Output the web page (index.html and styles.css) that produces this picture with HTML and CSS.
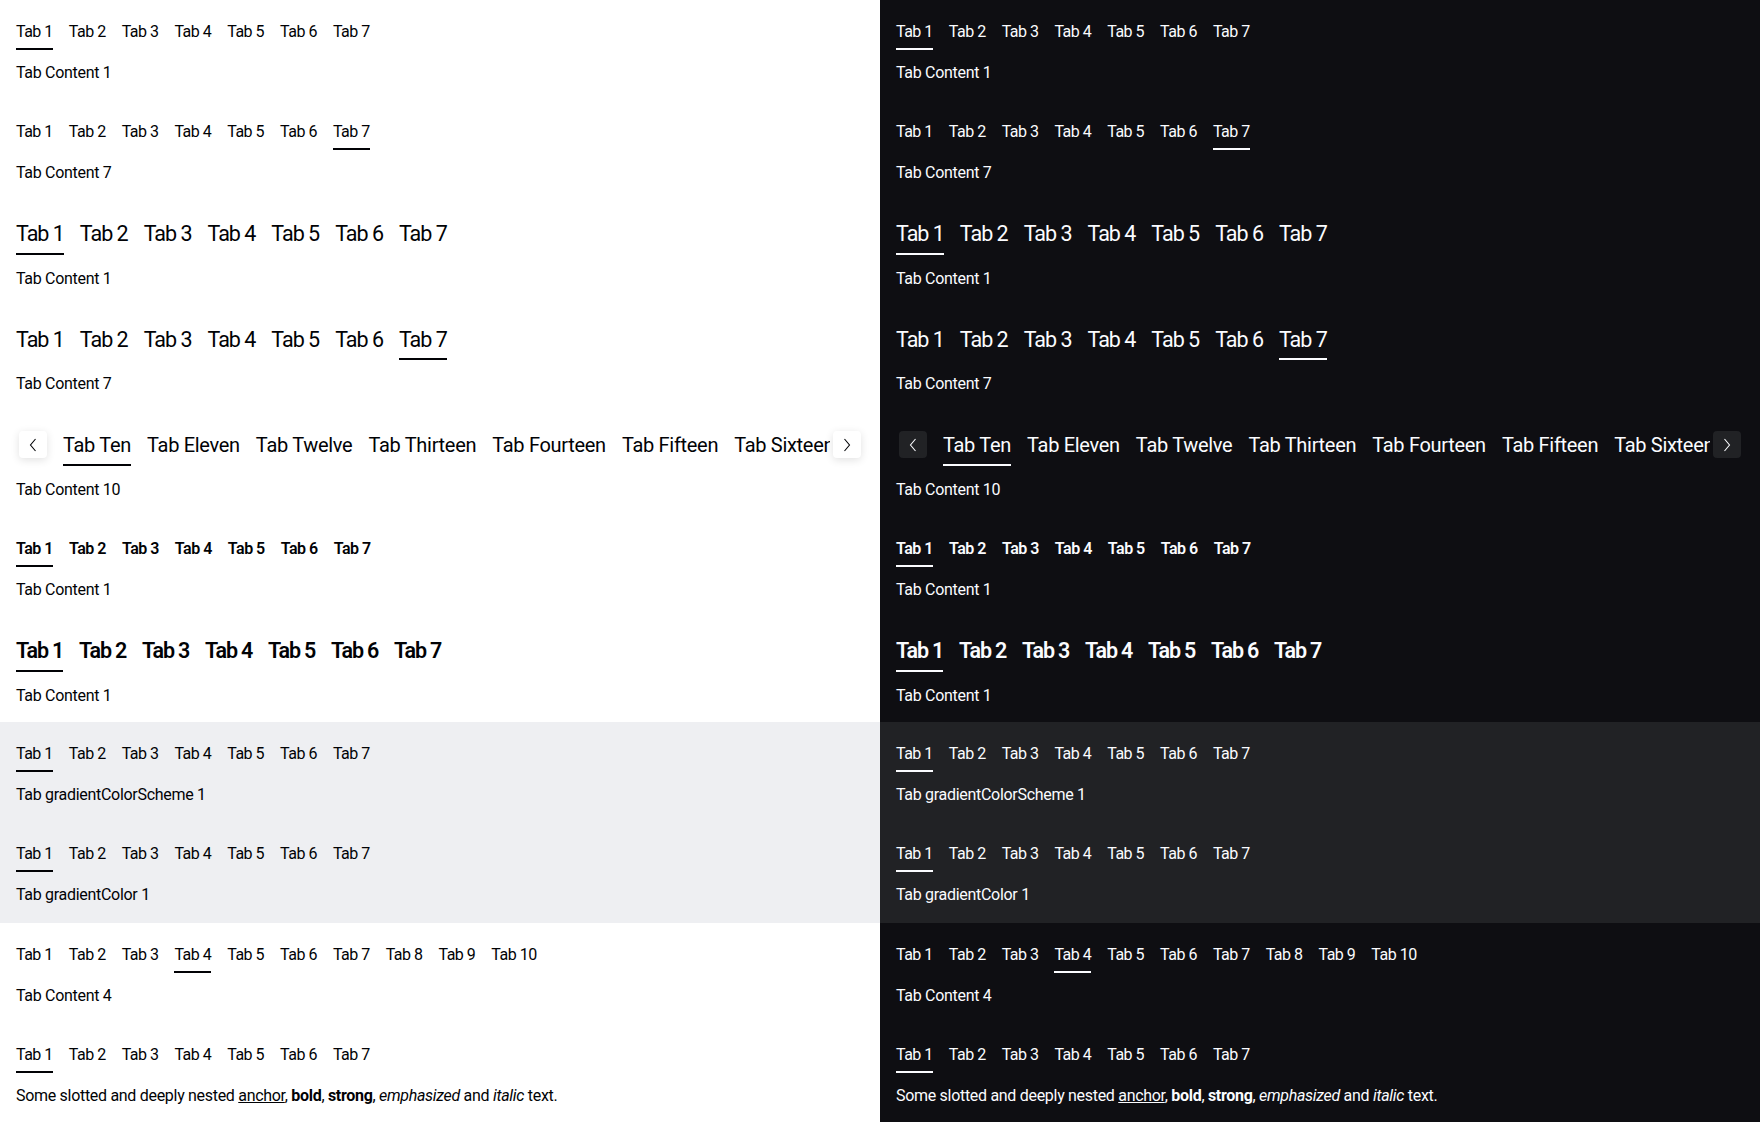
FILE: index.html
```html
<!DOCTYPE html>
<html lang="en">
<head>
<meta charset="utf-8">
<title>Tabs</title>
<link rel="stylesheet" href="styles.css">
</head>
<body>
<div class="page">
  <div class="col light">
    <section class="sec first">
      <div class="tabs small">
        <div class="bar"><button class="tab active">Tab 1</button><button class="tab">Tab 2</button><button class="tab">Tab 3</button><button class="tab">Tab 4</button><button class="tab">Tab 5</button><button class="tab">Tab 6</button><button class="tab">Tab 7</button></div>
        <div class="content">Tab Content 1</div>
      </div>
      <div class="tabs small">
        <div class="bar"><button class="tab">Tab 1</button><button class="tab">Tab 2</button><button class="tab">Tab 3</button><button class="tab">Tab 4</button><button class="tab">Tab 5</button><button class="tab">Tab 6</button><button class="tab active">Tab 7</button></div>
        <div class="content">Tab Content 7</div>
      </div>
      <div class="tabs medium">
        <div class="bar"><button class="tab active">Tab 1</button><button class="tab">Tab 2</button><button class="tab">Tab 3</button><button class="tab">Tab 4</button><button class="tab">Tab 5</button><button class="tab">Tab 6</button><button class="tab">Tab 7</button></div>
        <div class="content">Tab Content 1</div>
      </div>
      <div class="tabs medium">
        <div class="bar"><button class="tab">Tab 1</button><button class="tab">Tab 2</button><button class="tab">Tab 3</button><button class="tab">Tab 4</button><button class="tab">Tab 5</button><button class="tab">Tab 6</button><button class="tab active">Tab 7</button></div>
        <div class="content">Tab Content 7</div>
      </div>
      <div class="tabs medium scroll">
        <div class="scroller">
          <button class="arrow" aria-label="previous"><svg viewBox="0 0 24 24" width="24" height="24"><path d="M14.5 6 L9.5 12 L14.5 18" fill="none" stroke="currentColor" stroke-width="1.1"/></svg></button>
          <div class="viewport">
            <div class="bar"><button class="tab active">Tab Ten</button><button class="tab">Tab Eleven</button><button class="tab">Tab Twelve</button><button class="tab">Tab Thirteen</button><button class="tab">Tab Fourteen</button><button class="tab">Tab Fifteen</button><button class="tab">Tab Sixteen</button><button class="tab">Tab Seventeen</button></div>
          </div>
          <button class="arrow" aria-label="next"><svg viewBox="0 0 24 24" width="24" height="24"><path d="M9.5 6 L14.5 12 L9.5 18" fill="none" stroke="currentColor" stroke-width="1.1"/></svg></button>
        </div>
        <div class="content">Tab Content 10</div>
      </div>
      <div class="tabs small semibold">
        <div class="bar"><button class="tab active">Tab 1</button><button class="tab">Tab 2</button><button class="tab">Tab 3</button><button class="tab">Tab 4</button><button class="tab">Tab 5</button><button class="tab">Tab 6</button><button class="tab">Tab 7</button></div>
        <div class="content">Tab Content 1</div>
      </div>
      <div class="tabs medium semibold">
        <div class="bar"><button class="tab active">Tab 1</button><button class="tab">Tab 2</button><button class="tab">Tab 3</button><button class="tab">Tab 4</button><button class="tab">Tab 5</button><button class="tab">Tab 6</button><button class="tab">Tab 7</button></div>
        <div class="content">Tab Content 1</div>
      </div>
    </section>
    <section class="sec surface">
      <div class="tabs small">
        <div class="bar"><button class="tab active">Tab 1</button><button class="tab">Tab 2</button><button class="tab">Tab 3</button><button class="tab">Tab 4</button><button class="tab">Tab 5</button><button class="tab">Tab 6</button><button class="tab">Tab 7</button></div>
        <div class="content">Tab gradientColorScheme 1</div>
      </div>
      <div class="tabs small">
        <div class="bar"><button class="tab active">Tab 1</button><button class="tab">Tab 2</button><button class="tab">Tab 3</button><button class="tab">Tab 4</button><button class="tab">Tab 5</button><button class="tab">Tab 6</button><button class="tab">Tab 7</button></div>
        <div class="content">Tab gradientColor 1</div>
      </div>
    </section>
    <section class="sec">
      <div class="tabs small">
        <div class="bar"><button class="tab">Tab 1</button><button class="tab">Tab 2</button><button class="tab">Tab 3</button><button class="tab active">Tab 4</button><button class="tab">Tab 5</button><button class="tab">Tab 6</button><button class="tab">Tab 7</button><button class="tab">Tab 8</button><button class="tab">Tab 9</button><button class="tab">Tab 10</button></div>
        <div class="content">Tab Content 4</div>
      </div>
      <div class="tabs small">
        <div class="bar"><button class="tab active">Tab 1</button><button class="tab">Tab 2</button><button class="tab">Tab 3</button><button class="tab">Tab 4</button><button class="tab">Tab 5</button><button class="tab">Tab 6</button><button class="tab">Tab 7</button></div>
        <div class="content">Some slotted and deeply nested <a href="#">anchor</a>, <b>bold</b>, <strong>strong</strong>, <em>emphasized</em> and <i>italic</i> text.</div>
      </div>
    </section>
  </div>

  <div class="col dark">
    <section class="sec first">
      <div class="tabs small">
        <div class="bar"><button class="tab active">Tab 1</button><button class="tab">Tab 2</button><button class="tab">Tab 3</button><button class="tab">Tab 4</button><button class="tab">Tab 5</button><button class="tab">Tab 6</button><button class="tab">Tab 7</button></div>
        <div class="content">Tab Content 1</div>
      </div>
      <div class="tabs small">
        <div class="bar"><button class="tab">Tab 1</button><button class="tab">Tab 2</button><button class="tab">Tab 3</button><button class="tab">Tab 4</button><button class="tab">Tab 5</button><button class="tab">Tab 6</button><button class="tab active">Tab 7</button></div>
        <div class="content">Tab Content 7</div>
      </div>
      <div class="tabs medium">
        <div class="bar"><button class="tab active">Tab 1</button><button class="tab">Tab 2</button><button class="tab">Tab 3</button><button class="tab">Tab 4</button><button class="tab">Tab 5</button><button class="tab">Tab 6</button><button class="tab">Tab 7</button></div>
        <div class="content">Tab Content 1</div>
      </div>
      <div class="tabs medium">
        <div class="bar"><button class="tab">Tab 1</button><button class="tab">Tab 2</button><button class="tab">Tab 3</button><button class="tab">Tab 4</button><button class="tab">Tab 5</button><button class="tab">Tab 6</button><button class="tab active">Tab 7</button></div>
        <div class="content">Tab Content 7</div>
      </div>
      <div class="tabs medium scroll">
        <div class="scroller">
          <button class="arrow" aria-label="previous"><svg viewBox="0 0 24 24" width="24" height="24"><path d="M14.5 6 L9.5 12 L14.5 18" fill="none" stroke="currentColor" stroke-width="1.1"/></svg></button>
          <div class="viewport">
            <div class="bar"><button class="tab active">Tab Ten</button><button class="tab">Tab Eleven</button><button class="tab">Tab Twelve</button><button class="tab">Tab Thirteen</button><button class="tab">Tab Fourteen</button><button class="tab">Tab Fifteen</button><button class="tab">Tab Sixteen</button><button class="tab">Tab Seventeen</button></div>
          </div>
          <button class="arrow" aria-label="next"><svg viewBox="0 0 24 24" width="24" height="24"><path d="M9.5 6 L14.5 12 L9.5 18" fill="none" stroke="currentColor" stroke-width="1.1"/></svg></button>
        </div>
        <div class="content">Tab Content 10</div>
      </div>
      <div class="tabs small semibold">
        <div class="bar"><button class="tab active">Tab 1</button><button class="tab">Tab 2</button><button class="tab">Tab 3</button><button class="tab">Tab 4</button><button class="tab">Tab 5</button><button class="tab">Tab 6</button><button class="tab">Tab 7</button></div>
        <div class="content">Tab Content 1</div>
      </div>
      <div class="tabs medium semibold">
        <div class="bar"><button class="tab active">Tab 1</button><button class="tab">Tab 2</button><button class="tab">Tab 3</button><button class="tab">Tab 4</button><button class="tab">Tab 5</button><button class="tab">Tab 6</button><button class="tab">Tab 7</button></div>
        <div class="content">Tab Content 1</div>
      </div>
    </section>
    <section class="sec surface">
      <div class="tabs small">
        <div class="bar"><button class="tab active">Tab 1</button><button class="tab">Tab 2</button><button class="tab">Tab 3</button><button class="tab">Tab 4</button><button class="tab">Tab 5</button><button class="tab">Tab 6</button><button class="tab">Tab 7</button></div>
        <div class="content">Tab gradientColorScheme 1</div>
      </div>
      <div class="tabs small">
        <div class="bar"><button class="tab active">Tab 1</button><button class="tab">Tab 2</button><button class="tab">Tab 3</button><button class="tab">Tab 4</button><button class="tab">Tab 5</button><button class="tab">Tab 6</button><button class="tab">Tab 7</button></div>
        <div class="content">Tab gradientColor 1</div>
      </div>
    </section>
    <section class="sec">
      <div class="tabs small">
        <div class="bar"><button class="tab">Tab 1</button><button class="tab">Tab 2</button><button class="tab">Tab 3</button><button class="tab active">Tab 4</button><button class="tab">Tab 5</button><button class="tab">Tab 6</button><button class="tab">Tab 7</button><button class="tab">Tab 8</button><button class="tab">Tab 9</button><button class="tab">Tab 10</button></div>
        <div class="content">Tab Content 4</div>
      </div>
      <div class="tabs small">
        <div class="bar"><button class="tab active">Tab 1</button><button class="tab">Tab 2</button><button class="tab">Tab 3</button><button class="tab">Tab 4</button><button class="tab">Tab 5</button><button class="tab">Tab 6</button><button class="tab">Tab 7</button></div>
        <div class="content">Some slotted and deeply nested <a href="#">anchor</a>, <b>bold</b>, <strong>strong</strong>, <em>emphasized</em> and <i>italic</i> text.</div>
      </div>
    </section>
  </div>
</div>
</body>
</html>
```

FILE: styles.css
```css
* { box-sizing: border-box; }

html, body {
  margin: 0;
  padding: 0;
}

body {
  font-family: Roboto, "Liberation Sans", Arial, sans-serif;
  font-size: 16px;
  line-height: 24px;
  letter-spacing: -0.3px;
}

.page {
  display: grid;
  grid-template-columns: 880px 880px;
  width: 1760px;
  min-height: 1122px;
}

.col {
  display: flex;
  flex-direction: column;
}

.col.light {
  background: #ffffff;
  color: #010205;
}

.col.dark {
  background: #0e0e12;
  color: #fbfcff;
}

.sec {
  display: flex;
  flex-direction: column;
  gap: 31px;
  padding: 16px;
}

.sec.first {
  padding-bottom: 14px;
}

.light .surface { background: #eeeff2; }
.dark .surface { background: #212225; }

.tabs {
  display: flex;
  flex-direction: column;
  align-items: flex-start;
}

.bar {
  display: flex;
  gap: 16px;
  white-space: nowrap;
}

.tab {
  font: inherit;
  letter-spacing: -0.5px;
  color: inherit;
  background: none;
  border: 0;
  border-bottom: 2px solid transparent;
  margin: 0;
  padding: 4px 0;
  cursor: pointer;
  line-height: 24px;
}

.tab.active {
  border-bottom-color: currentColor;
}

.content {
  margin-top: 11px;
  font-size: 16px;
  line-height: 24px;
  font-weight: 400;
  letter-spacing: -0.3px;
}

.medium .tab {
  font-size: 21.5px;
  line-height: 28.67px;
  letter-spacing: -1px;
}

.medium .content {
  margin-top: 12px;
}

.semibold .tab {
  font-weight: 600;
  letter-spacing: -0.5px;
}

.medium.semibold .tab {
  letter-spacing: -1.2px;
}

/* scrolling tabs */
.scroller {
  display: flex;
  align-items: flex-start;
  width: 848px;
}

.scroll .tab {
  font-size: 20px;
  letter-spacing: -0.3px;
}

.viewport {
  flex: 1;
  min-width: 0;
  overflow: hidden;
  margin-left: 13px;
}

.arrow {
  flex: none;
  width: 28px;
  height: 27px;
  margin: 4px 3px 0;
  padding: 0;
  border: 0;
  border-radius: 4px;
  display: flex;
  align-items: center;
  justify-content: center;
  color: inherit;
  cursor: pointer;
}

.arrow svg { display: block; }

.light .arrow {
  background: #ffffff;
  box-shadow: 0 2px 8px rgba(0, 0, 0, 0.12);
}

.dark .arrow {
  background: #212225;
}

.content a {
  color: inherit;
  text-decoration: underline;
}

.content b,
.content strong {
  font-weight: 700;
}
```
